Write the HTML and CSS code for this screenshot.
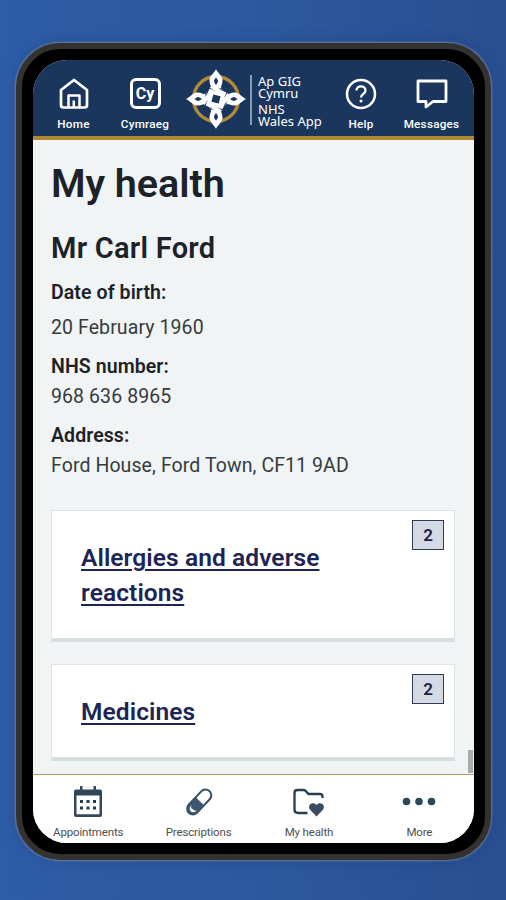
FILE: index.html
```html
<!DOCTYPE html>
<html lang="en">
<head>
<meta charset="utf-8">
<title>My health</title>
<link rel="stylesheet" href="styles.css">
</head>
<body>
<div class="phone">
  <div class="screen">
    <header class="topbar">
      <a class="top-item home">
        <svg width="30" height="32" viewBox="0 0 30 32" fill="none" stroke="#fff" stroke-width="2.700" stroke-linejoin="round"><path d="M2 12 15 2l13 10v15q0 2.500-2.500 2.500h-21Q2 29.500 2 27z"/><path d="M9.500 29V17.500h11V29M14.800 29v-6.500" stroke-width="2.500"/></svg>
        <span>Home</span>
      </a>
      <a class="top-item cymraeg">
        <span class="cy">Cy</span>
        <span>Cymraeg</span>
      </a>
      <div class="brand">
        <svg class="knot" width="60" height="62" viewBox="-30 -31 60 62" fill="none">
          <defs>
            <g id="arm">
              <path d="M0-30C-1.500-26-6.500-23.500-6.500-18.500-6.500-14.500-4.500-12-3.500-9H3.500C4.500-12 6.500-14.500 6.500-18.500 6.500-23.500 1.500-26 0-30z" fill="#fff"/>
              <path d="M0-21.500C-1-20-2.200-19-2-17.500-1.500-16-.7-15 0-14 .7-15 1.500-16 2-17.500 2.200-19 1-20 0-21.500z" fill="#1b365d"/>
            </g>
            <g id="strand">
              <path d="M-4.500-13Q-1-9 9.500-4.500M4-13Q1-10-3-7.500" stroke="#fff" stroke-width="4.200"/>
              <path d="M-4.500-10.500-1.500-8M2.500-11 7-9" stroke="#6f819b" stroke-width=".8"/>
            </g>
          </defs>
          <circle r="22.500" stroke="#b28b39" stroke-width="3.400"/>
          <use href="#arm"/><use href="#arm" transform="rotate(90)"/><use href="#arm" transform="rotate(180)"/><use href="#arm" transform="rotate(270)"/>
          <use href="#strand"/><use href="#strand" transform="rotate(90)"/><use href="#strand" transform="rotate(180)"/><use href="#strand" transform="rotate(270)"/>
          <rect x="-5.500" y="-5.500" width="11" height="11" transform="rotate(14)" fill="#1b365d" stroke="#fff" stroke-width="3.500"/>
        </svg>
        <div class="brand-text"><span>Ap GIG</span><span>Cymru</span><span class="nhs">NHS</span><span>Wales App</span></div>
      </div>
      <a class="top-item help">
        <svg width="32" height="32" viewBox="0 0 32 32" fill="none" stroke="#fff"><circle cx="16" cy="16" r="14" stroke-width="2.500"/><path d="M11.500 12.500c0-5.500 9-5.500 9 0 0 3.500-4.500 3.500-4.500 7" stroke-width="2.300"/><circle cx="16" cy="23" r="1.500" fill="#fff" stroke="none"/></svg>
        <span>Help</span>
      </a>
      <a class="top-item messages">
        <svg width="32" height="32" viewBox="0 0 32 32" fill="none" stroke="#fff" stroke-width="2.800" stroke-linejoin="round"><path d="M2 3h28v20.500H17L10 29v-5.500H2z"/></svg>
        <span>Messages</span>
      </a>
    </header>

    <main class="content">
      <h1>My health</h1>
      <h2>Mr Carl Ford</h2>
      <dl>
        <dt>Date of birth:</dt>
        <dd class="dob">20 February 1960</dd>
        <dt>NHS number:</dt>
        <dd>968 636 8965</dd>
        <dt>Address:</dt>
        <dd>Ford House, Ford Town, CF11 9AD</dd>
      </dl>
      <section class="card"><a class="card-link">Allergies and adverse reactions</a><span class="count">2</span></section>
      <section class="card"><a class="card-link">Medicines</a><span class="count">2</span></section>
      <div class="scroll-thumb"></div>
    </main>

    <nav class="tabbar">
      <a class="tab">
        <svg width="34" height="34" viewBox="0 0 34 34"><path d="M5 4.500h4V1h2.500v3.500h11V1H25v3.500h4q2 0 2 2V30q0 2-2 2H5q-2 0-2-2V6.500q0-2 2-2z" fill="#314759"/><path d="M5.500 10.500h23v18.700h-23z" fill="#fff"/><path d="M9 15h3v3H9zm6.500 0h3v3h-3zm6.500 0h3v3h-3zM9 21.500h3v3H9zm6.500 0h3v3h-3zm6.500 0h3v3h-3z" fill="#24394b"/></svg>
        <span>Appointments</span>
      </a>
      <a class="tab">
        <svg width="34" height="34" viewBox="0 0 34 34"><g transform="translate(17.200 17) rotate(43)"><rect x="-5.800" y="-15" width="11.600" height="30" rx="5.800" fill="#fff" stroke="#314f68" stroke-width="2"/><path d="M-5.800-1H5.800v10.200a5.800 5.800 0 0 1-11.600 0z" fill="#3b566d"/><path d="M-3.500 7.500q0 5 4 5Q4 12 4 7.500 2 10.500 0 9.500-2 11-3.500 7.500z" fill="#fff"/></g></svg>
        <span>Prescriptions</span>
      </a>
      <a class="tab">
        <svg width="34" height="34" viewBox="0 0 34 34" fill="none"><path d="M15.500 28H6q-3.500 0-3.500-3.500V8Q2.500 5 5.500 5h6.200q1.300 0 2.300 1.200L16.500 9H28q2.500 0 2.500 2.500V13" stroke="#263f50" stroke-width="2.300"/><path d="M24.500 31.500 18.300 25c-4-4.500 2.500-9.500 6.200-5 3.700-4.500 10.200.5 6.200 5z" fill="#3a4c61"/></svg>
        <span>My health</span>
      </a>
      <a class="tab">
        <svg width="34" height="34" viewBox="0 0 34 34" fill="#2b485b"><circle cx="4.500" cy="16.500" r="3.800"/><circle cx="17" cy="16.500" r="3.800"/><circle cx="29.500" cy="16.500" r="3.800"/></svg>
        <span>More</span>
      </a>
    </nav>
  </div>
</div>
</body>
</html>
```
FILE: styles.css
```css
* { box-sizing: border-box; }
body {
  margin: 0;
  height: 900px;
  padding: 43px 15px 40px 16px;
  background: linear-gradient(90deg, #2e5da7, #2c589e 55%, #294f91);
  font-family: Roboto, "Liberation Sans", sans-serif;
  overflow: hidden;
}
.phone {
  height: 817px;
  padding: 11px;
  background: #000;
  border: 6px solid #34322f;
  border-radius: 44px;
  box-shadow: 0 0 2px 1px rgba(125, 140, 165, .75), 0 0 12px 2px rgba(25, 55, 120, .35);
}
.screen {
  height: 783px;
  display: flex;
  flex-direction: column;
  overflow: hidden;
  border-radius: 34px;
  background: #f0f4f5;
}
.topbar {
  flex: 0 0 80px;
  display: grid;
  grid-template-columns: 81px 62px 150px 70px 71px;
  background: #1b365d;
  border-bottom: 4px solid #b08933;
}
.top-item {
  display: flex;
  flex-direction: column;
  align-items: center;
  padding-top: 18px;
  color: #fff;
  font-size: 11.700px;
  line-height: 14px;
  font-weight: 500;
  letter-spacing: .25px;
  white-space: nowrap;
}
.top-item svg { display: block; height: 32px; }
.top-item > span:last-child { margin-top: 7px; }
.cy {
  width: 31px;
  height: 31px;
  margin-bottom: 1px;
  border: 3px solid #fff;
  border-radius: 6px;
  font-size: 16px;
  line-height: 25px;
  font-weight: 700;
  letter-spacing: 0;
  text-align: center;
}
.brand { display: flex; align-items: flex-start; padding: 8px 0 0 10px; }
.knot { flex: none; }
.brand-text {
  height: 50px;
  margin: 7px 0 0 4px;
  padding-left: 6px;
  border-left: 2px solid #8c9bb0;
  display: flex;
  flex-direction: column;
  color: #fff;
  font: 13px/12px "Noto Sans", sans-serif;
  white-space: nowrap;
}
.brand-text .nhs { margin-top: 4px; }
.content {
  position: relative;
  flex: 1;
  min-height: 0;
  padding: 20px 18px 0;
  overflow: hidden;
  color: #1c2227;
}
h1, h2, dl, dd { margin: 0; }
h1 { font-size: 39.500px; line-height: 48px; font-weight: 600; letter-spacing: -.05px; }
h2 { margin-top: 22px; font-size: 29px; line-height: 36px; font-weight: 600; letter-spacing: .25px; }
dl { margin-top: 12px; font-size: 19.500px; line-height: 30px; letter-spacing: .09px; }
dt { font-weight: 600; }
dd { margin-bottom: 9px; color: #353b3f; }
.dob { margin-top: 5px; }
.card {
  display: flex;
  justify-content: space-between;
  align-items: flex-start;
  width: 404px;
  margin-bottom: 22px;
  padding: 29px 10px 28px 29px;
  background: #fff;
  border: 1px solid #dfe4e6;
  border-bottom: 4px solid #d8dde0;
}
dl + .card { margin-top: 29px; }
.card-link {
  width: 270px;
  color: #1c2555;
  font-size: 24.500px;
  line-height: 35px;
  font-weight: 600;
  letter-spacing: .09px;
  text-decoration: underline;
  text-decoration-thickness: 2px;
  text-underline-offset: 3px;
}
.count {
  width: 32px;
  height: 30px;
  margin-top: -20px;
  background: #d3dae3;
  border: 1px solid #2f3b55;
  color: #1b2341;
  font-size: 17px;
  line-height: 28px;
  font-weight: 600;
  text-align: center;
}
.scroll-thumb {
  position: absolute;
  right: 1px;
  bottom: 1px;
  width: 5px;
  height: 23px;
  background: #a7abac;
}
.tabbar {
  flex: 0 0 69px;
  display: grid;
  grid-template-columns: repeat(4, 110.400px);
  background: #fff;
  border-top: 1px solid #b99a58;
}
.tab {
  display: flex;
  flex-direction: column;
  align-items: center;
  padding-top: 10px;
  color: #4b5052;
  font-size: 11.500px;
  line-height: 14px;
  letter-spacing: -.15px;
}
.tab svg { display: block; overflow: visible; }
.tab span { margin-top: 6px; white-space: nowrap; }
```
